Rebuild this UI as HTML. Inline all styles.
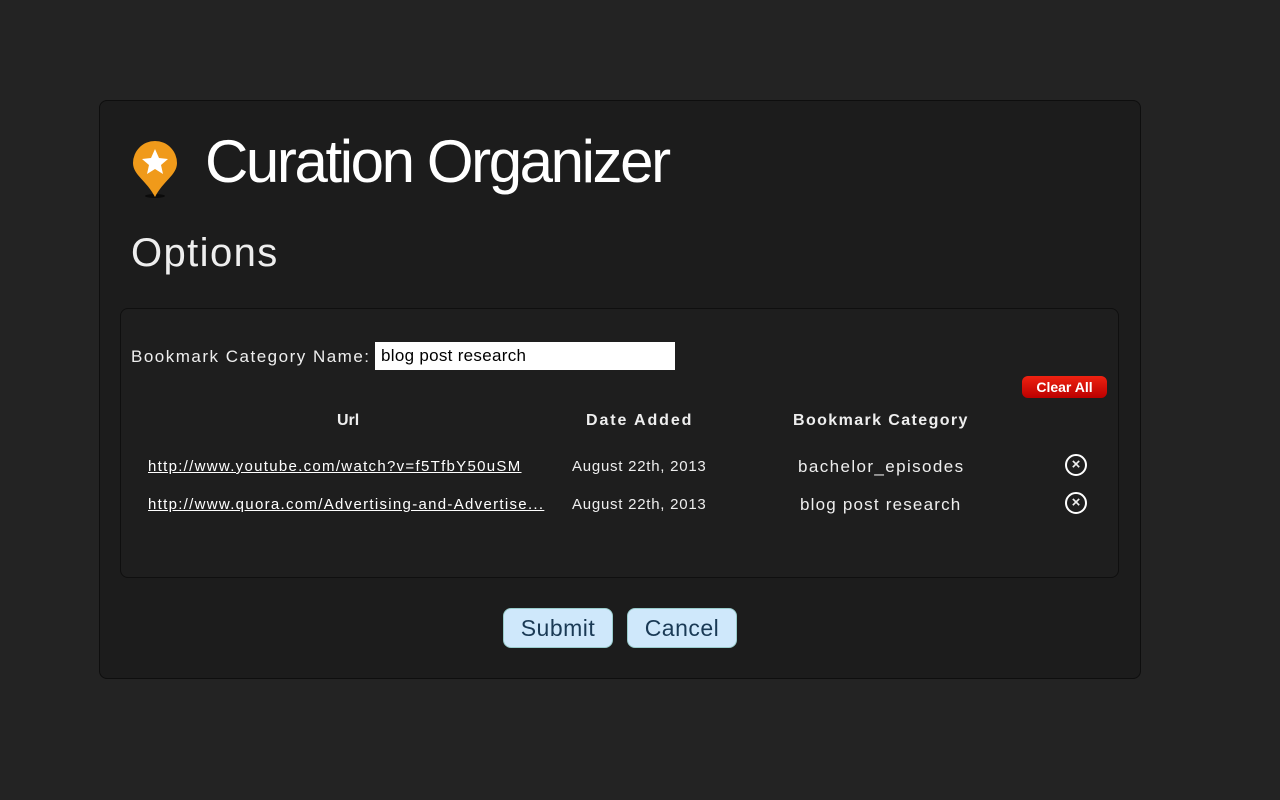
<!DOCTYPE html>
<html><head><style>
body{margin:0;width:1280px;height:800px;background:#232323;font-family:"Liberation Sans",sans-serif;color:#eee;position:relative;overflow:hidden}
.main{position:absolute;left:99px;top:100px;width:1040px;height:577px;background:#1c1c1c;border:1px solid #0e0e0e;border-radius:8px}
.title{position:absolute;font-size:60px;color:#fff;letter-spacing:-2.4px}
.opt{position:absolute;left:31px;top:130px;font-size:40px;color:#eee;letter-spacing:1.4px}
.inner{position:absolute;left:20px;top:207px;width:997px;height:268px;border:1px solid #0f0f0f;border-radius:8px;background:#1e1e1e}
.abs{position:absolute;white-space:nowrap}
.btn{position:absolute;top:507px;height:38px;background:#cfe8fb;border:1px solid #9cc;border-radius:8px;color:#1a3a55;font-size:23px;text-align:center;line-height:38px;letter-spacing:0.5px}
.x{position:absolute;width:18px;height:18px;border:2px solid #fff;border-radius:50%;text-align:center;line-height:18px;font-size:15px;font-weight:bold}
.u{color:#fff;text-decoration:underline;letter-spacing:1.3px}
</style></head><body>
<div class="main">
<svg style="position:absolute;left:30px;top:38px" width="50" height="60" viewBox="0 0 50 60"><ellipse cx="25" cy="57" rx="10" ry="2" fill="#000" opacity=".6"/><path d="M25 2a22 22 0 0 0-22 22c0 12 14 18 22 34 8-16 22-22 22-34A22 22 0 0 0 25 2z" fill="#f09a1a"/><path d="M25 10l4 9 9 1-7 6 2 9-8-5-8 5 2-9-7-6 9-1z" fill="#fff"/></svg>
<div class="title" style="left:105px;top:26px">Curation Organizer</div>
<div class="opt">Options</div>
<div class="inner">
<div class="abs" style="left:10px;top:38px;font-size:17px;letter-spacing:1.5px">Bookmark Category Name:</div>
<div class="abs" style="left:254px;top:33px;width:294px;height:28px;background:#fff;color:#000;font-size:17px;line-height:28px;padding-left:6px;letter-spacing:0.3px">blog post research</div>
<div class="abs" style="left:901px;top:67px;width:85px;height:22px;background:linear-gradient(#e21,#b00);border-radius:6px;color:#fff;font-weight:bold;font-size:14px;text-align:center;line-height:22px">Clear All</div>
<div class="abs" style="left:216px;top:103px;font-weight:bold;font-size:16px">Url</div>
<div class="abs" style="left:465px;top:103px;font-weight:bold;font-size:16px;letter-spacing:1.9px">Date Added</div>
<div class="abs" style="left:672px;top:103px;font-weight:bold;font-size:16px;letter-spacing:1.4px">Bookmark Category</div>
<div class="abs u" style="left:27px;top:149px;font-size:15px">http://www.youtube.com/watch?v=f5TfbY50uSM</div>
<div class="abs u" style="left:27px;top:187px;font-size:15px">http://www.quora.com/Advertising-and-Advertise...</div>
<div class="abs" style="left:451px;top:149px;font-size:15px;letter-spacing:0.75px">August 22th, 2013</div>
<div class="abs" style="left:451px;top:187px;font-size:15px;letter-spacing:0.75px">August 22th, 2013</div>
<div class="abs" style="left:677px;top:148px;font-size:17px;letter-spacing:1.4px">bachelor_episodes</div>
<div class="abs" style="left:679px;top:186px;font-size:17px;letter-spacing:1.2px">blog post research</div>
<div class="x" style="left:944px;top:145px">×</div>
<div class="x" style="left:944px;top:183px">×</div>
</div>
<div class="btn" style="left:403px;width:108px">Submit</div>
<div class="btn" style="left:527px;width:108px">Cancel</div>
</div>
</body></html>
